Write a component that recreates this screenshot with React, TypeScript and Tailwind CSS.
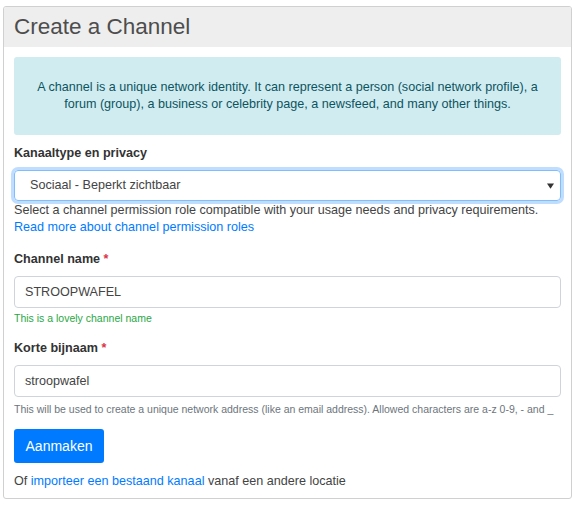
import React from "react";

export default function App() {
  return (
    <div className="w-[575px] h-[506px] bg-white pt-[6px] px-[3px] text-[12.6px] text-[#333]" style={{ fontFamily: '"Liberation Sans", Arial, sans-serif' }}>
      <div className="w-[569px] h-[493px] border border-[#d0d0d0] rounded-[3px] overflow-hidden">
        <div className="h-[40px] bg-[#eeeeee] px-[10px] flex items-center">
          <h1 className="text-[22.5px] text-[#4d4d4d] leading-none">Create a Channel</h1>
        </div>
        <div className="px-[10px] pt-[10px]">
          <div className="h-[78px] bg-[#d1ecf1] text-[#0c5460] rounded-[3px] flex items-center justify-center text-center px-[12px] leading-[17px]">
            <p>A channel is a unique network identity. It can represent a person (social network profile), a forum (group), a business or celebrity page, a newsfeed, and many other things.</p>
          </div>
          <div className="mt-[10px] font-bold leading-[17px] text-[#333]">Kanaaltype en privacy</div>
          <div className="mt-[8px] h-[31px] rounded-[4px] border border-[#80bdff] shadow-[0_0_0_3px_rgba(0,123,255,0.25)] flex items-center justify-between pl-[15px] pr-[6px] text-[#444]">
            <span>Sociaal - Beperkt zichtbaar</span>
            <svg width="7" height="6" viewBox="0 0 8 6"><path d="M0 0 L8 0 L4 6 Z" fill="#333" /></svg>
          </div>
          <div className="mt-[1px] leading-[17px] text-[#444]">Select a channel permission role compatible with your usage needs and privacy requirements.</div>
          <a className="block leading-[17px] text-[#007bff]">Read more about channel permission roles</a>
          <div className="mt-[15px] font-bold leading-[17px]">Channel name <span className="text-[#dc3545]">*</span></div>
          <div className="mt-[8px] h-[32px] rounded-[4px] border border-[#ced4da] flex items-center pl-[10px] text-[#444]">STROOPWAFEL</div>
          <div className="mt-[3px] text-[10.5px] leading-[14px] text-[#28a745]">This is a lovely channel name</div>
          <div className="mt-[15px] font-bold leading-[17px]">Korte bijnaam <span className="text-[#dc3545]">*</span></div>
          <div className="mt-[8px] h-[32px] rounded-[4px] border border-[#ced4da] flex items-center pl-[10px] text-[#444]">stroopwafel</div>
          <div className="mt-[5px] text-[10.5px] leading-[14px] text-[#6c757d] whitespace-nowrap">This will be used to create a unique network address (like an email address). Allowed characters are a-z 0-9, - and _</div>
          <button className="mt-[13px] h-[34px] w-[90px] bg-[#007bff] text-white rounded-[3px] text-[14px]">Aanmaken</button>
          <div className="mt-[10px] leading-[17px] text-[#444]">Of <a className="text-[#007bff]">importeer een bestaand kanaal</a> vanaf een andere locatie</div>
        </div>
      </div>
    </div>
  );
}
